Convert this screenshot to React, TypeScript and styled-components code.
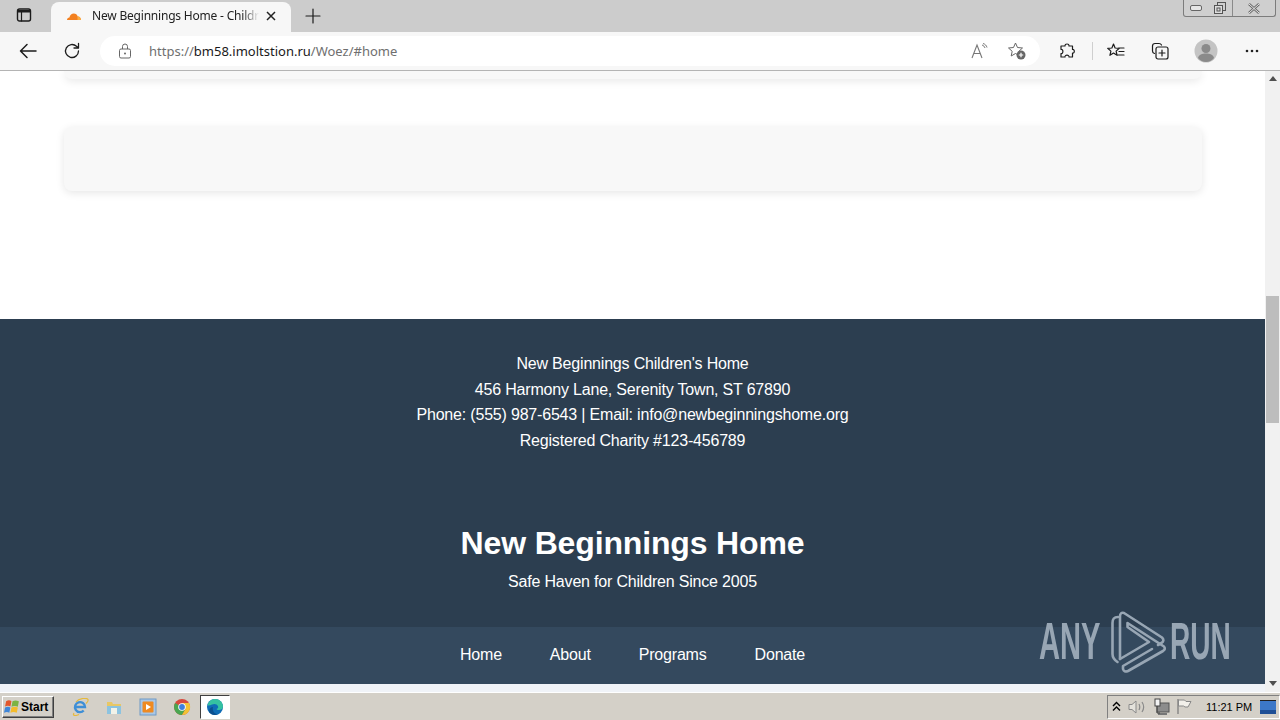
import React from "react";
import styled, { createGlobalStyle } from "styled-components";

const Global = createGlobalStyle`
  html, body { margin: 0; padding: 0; width: 1280px; height: 720px; overflow: hidden; background: #fff; }
  * { box-sizing: border-box; }
`;
const Screen = styled.div`
  width: 1280px; height: 720px; position: relative; display: flex; flex-direction: column; overflow: hidden;
  font-family: "Liberation Sans", Arial, sans-serif;
`;
const TabBar = styled.div`
  height: 32px; flex: none; background: #cccccc; display: flex; align-items: flex-end; position: relative;
`;
const TabToggle = styled.div`
  width: 51px; height: 32px; display: flex; align-items: center; justify-content: center; padding: 0 3px 2px 0;
`;
const Tab = styled.div`
  width: 240px; height: 30px; background: #f7f7f7; border-radius: 8px 8px 0 0; display: flex; align-items: center;
  padding: 0 0 3px 15px; gap: 9px; font-family: "Noto Sans", sans-serif; font-size: 12px; color: #222;
`;
const TabTitle = styled.span`
  width: 167px; line-height: 18px; overflow: hidden; white-space: nowrap; letter-spacing: -0.2px; margin-left: 1px;
  -webkit-mask-image: linear-gradient(90deg, #000 90%, transparent);
  mask-image: linear-gradient(90deg, #000 90%, transparent);
`;
const NewTab = styled.div`
  width: 44px; height: 30px; display: flex; align-items: center; justify-content: center; padding-bottom: 3px;
`;
const WindowButtons = styled.div`
  position: absolute; top: 0; left: 1183px; width: 93px; height: 17px; border: 1px solid #7c7c7c; border-top: none;
  border-radius: 0 0 3px 3px; display: flex; background: #cfcfcf;
`;
const WinButton = styled.div<{ $w: number; $line?: boolean }>`
  width: ${(p) => p.$w}px; display: flex; align-items: center; justify-content: center;
  border-right: ${(p) => (p.$line ? "1px solid #8a8a8a" : "none")};
`;
const Toolbar = styled.div`
  height: 39px; flex: none; background: #f7f7f7; border-bottom: 1px solid #b4b4b4; display: flex; align-items: center;
`;
const NavIcon = styled.div<{ $w: number; $ml?: number }>`
  width: ${(p) => p.$w}px; height: 32px; flex: none; display: flex; align-items: center; justify-content: center;
  margin-left: ${(p) => p.$ml ?? 0}px;
`;
const AddressPill = styled.div`
  width: 940px; height: 30px; margin-left: 12px; background: #fff; border-radius: 15px; display: flex; align-items: center; flex: none;
  padding-left: 18px;
`;
const Url = styled.div`
  margin-left: 17px; flex: 1; font-family: "Noto Sans", sans-serif; font-size: 13px; line-height: 18px; color: #6f6f6f; white-space: nowrap;
  b { font-weight: 400; color: #1a1a1a; }
`;
const Divider = styled.div`
  width: 1px; height: 18px; background: #cfcfcf; flex: none;
`;
const Viewport = styled.div`
  height: 621px; flex: none; display: flex; background: #fff; overflow: hidden;
`;
const Page = styled.div`
  width: 1265px; flex: none; display: flex; flex-direction: column; color: #fff;
`;
const Main = styled.div`
  height: 248px; flex: none; display: flex; flex-direction: column; align-items: center; gap: 48px; background: #fff;
`;
const Card = styled.div<{ $h: number; $cut?: boolean }>`
  width: 1138px; height: ${(p) => p.$h}px; background: #f8f8f8; flex: none;
  border-radius: ${(p) => (p.$cut ? "0 0 8px 8px" : "8px")};
  box-shadow: 0 2px 8px rgba(0, 0, 0, 0.1);
`;
const Footer = styled.footer`
  background: #2c3e50; text-align: center; flex: none;
`;
const Contact = styled.div`
  padding: 32px; font-size: 16px; line-height: 25.6px; letter-spacing: -0.19px;
  p { margin: 0; }
`;
const Brand = styled.header`
  padding: 33px 32px 32px;
`;
const BrandTitle = styled.h1`
  margin: 0; font-size: 32px; line-height: 51px; font-weight: 700; letter-spacing: -0.15px; color: #fff;
`;
const Tagline = styled.p`
  margin: 0; font-size: 16px; line-height: 25.6px; letter-spacing: -0.19px;
`;
const SiteNav = styled.nav`
  background: #34495e; height: 57px; flex: none; display: flex; align-items: center; justify-content: center; gap: 48px;
  font-size: 16px; letter-spacing: -0.19px;
`;
const Strip = styled.div`
  flex: 1; background: #f0f3f8;
`;
const Scrollbar = styled.div`
  width: 15px; flex: none; background: #f1f1f1; display: flex; flex-direction: column; align-items: center;
`;
const ScrollArrow = styled.div<{ $down?: boolean }>`
  width: 0; height: 0; border-left: 4px solid transparent; border-right: 4px solid transparent;
  ${(p) => (p.$down ? "border-top: 5px solid #505050; margin-top: 258px;" : "border-bottom: 5px solid #505050; margin-top: 5px;")}
`;
const ScrollThumb = styled.div`
  width: 13px; height: 127px; background: #bdbdbd; margin-top: 215px; flex: none;
`;
const Watermark = styled.div`
  position: absolute; left: 1039px; top: 608px; width: 193px; height: 66px; display: flex; align-items: center;
  color: #98a6b4;
`;
const WmText = styled.span<{ $scale: number; $w: number }>`
  font-family: "Liberation Sans", sans-serif; font-size: 52px; line-height: 66px; font-weight: 700; width: ${(p) => p.$w}px; white-space: nowrap; flex: none;
  display: block; transform: scaleX(${(p) => p.$scale}); transform-origin: left center;
`;
const Taskbar = styled.div`
  height: 28px; flex: none; background: #d4d0c8; border-top: 1px solid #fff; display: flex; align-items: center; padding-left: 2px;
`;
const StartButton = styled.div`
  width: 52px; height: 22px; background: #d4d0c8; border: 1px solid; border-color: #fff #404040 #404040 #fff;
  box-shadow: inset -1px -1px 0 #808080; display: flex; align-items: center; padding-left: 1px;
  font: 700 12px "Liberation Sans", sans-serif; color: #000; flex: none;
`;
const TaskIcons = styled.div`
  display: flex; align-items: center; margin-left: 9px; flex: none;
`;
const TaskIcon = styled.div<{ $active?: boolean }>`
  width: ${(p) => (p.$active ? 30 : 34)}px; height: 24px; display: flex; align-items: center; justify-content: center; flex: none;
  ${(p) => (p.$active ? "background:#fff; border:1px solid; border-color:#404040 #fff #fff #404040; margin-left:1px;" : "")}
`;
const Tray = styled.div`
  margin-left: auto; width: 173px; height: 24px; border: 1px solid; border-color: #808080 #fff #fff #808080; display: flex; align-items: center; flex: none;
  padding-left: 1px;
`;
const Clock = styled.span`
  font: 11px "Liberation Sans", sans-serif; color: #000; margin-left: 9px; width: 54px; white-space: nowrap; flex: none;
`;
const TrayIcon = styled.div<{ $w: number }>`
  width: ${(p) => p.$w}px; height: 18px; flex: none; display: flex; align-items: center; justify-content: center;
`;

const Line = { fill: "none", stroke: "#1c1c1c", strokeWidth: 1.2, strokeLinecap: "round", strokeLinejoin: "round" } as const;

const App = () => (
  <Screen>
    <Global />
    <TabBar>
      <TabToggle>
        <svg width="16" height="16" viewBox="0 0 16 16"><rect x="1.5" y="2" width="13" height="12" rx="2" {...Line} strokeWidth={1.4} /><path d="M2 3h12v2.5H2z" fill="#1c1c1c" /><path d="M5.5 5v9" {...Line} /></svg>
      </TabToggle>
      <Tab>
        <svg width="16" height="10" viewBox="0 0 16 10"><path d="M1 9c0-1.5 1-2.4 2.4-2.5C4 4 5.800 2.500 7.800 2.500c2 0 3.400 1.200 3.900 3 1.800-.3 3.300 1.500 3.300 3.500z" fill="#f38020" /><path d="M11.500 5.500c1.800-.3 3.300 1.500 3.500 3.500h-3.500z" fill="#fbad41" /></svg>
        <TabTitle>New Beginnings Home - Childr</TabTitle>
        <svg width="12" height="12" viewBox="0 0 12 12" style={{ marginLeft: -3 }}><path d="M2 2l8 8M10 2l-8 8" fill="none" stroke="#222" strokeWidth="1.500" /></svg>
      </Tab>
      <NewTab>
        <svg width="16" height="16" viewBox="0 0 16 16"><path d="M8 1v14M1 8h14" {...Line} /></svg>
      </NewTab>
      <WindowButtons>
        <WinButton $w={24}><svg width="12" height="6" viewBox="0 0 12 6"><rect x="0.500" y="0.500" width="11" height="5" rx="1.500" fill="#e6e6e6" stroke="#666" /></svg></WinButton>
        <WinButton $w={25} $line><svg width="14" height="14" viewBox="0 0 14 14"><rect x="4.500" y="1.500" width="8" height="8" fill="none" stroke="#555" /><rect x="1.500" y="4.500" width="8" height="8" fill="#ddd" stroke="#555" /><rect x="4" y="7" width="3" height="3" fill="none" stroke="#555" /></svg></WinButton>
        <WinButton $w={42}><svg width="14" height="11" viewBox="0 0 14 11"><path d="M2 1l10 9M12 1L2 10" fill="none" stroke="#666" strokeWidth="2.400" /><path d="M2 1l10 9M12 1L2 10" fill="none" stroke="#e8e8e8" strokeWidth="1" /></svg></WinButton>
      </WindowButtons>
    </TabBar>
    <Toolbar>
      <NavIcon $w={56}><svg width="18" height="16" viewBox="0 0 18 16"><path d="M17 8H1.500M8 1.500L1.500 8 8 14.500" {...Line} strokeWidth={1.500} /></svg></NavIcon>
      <NavIcon $w={32}><svg width="18" height="18" viewBox="0 0 18 18"><path d="M15.500 9a6.500 6.500 0 1 1-2-4.700L15.500 6M15.500 1.500V6H11" {...Line} strokeWidth={1.300} /></svg></NavIcon>
      <AddressPill>
        <svg width="14" height="16" viewBox="0 0 14 16"><rect x="1.500" y="6" width="11" height="9" rx="1.500" fill="none" stroke="#666" /><path d="M4.500 6V3.500a2.500 2.500 0 0 1 5 0V6" fill="none" stroke="#666" /><circle cx="7" cy="10.500" r="1" fill="#666" /></svg>
        <Url>https://<b>bm58.imoltstion.ru</b>/Woez/#home</Url>
        <NavIcon $w={28}><svg width="18" height="16" viewBox="0 0 18 16"><path d="M1 15L6 2l5 13M3 10.500h6" fill="none" stroke="#777" strokeWidth="1.100" /><path d="M11 2c1.500.5 2.500 1.500 3 3M12 .500c2 .5 3.500 2 4 4" fill="none" stroke="#777" /></svg></NavIcon>
        <NavIcon $w={46}><svg width="20" height="20" viewBox="0 0 20 20"><path d="M8.500 2l2 4.500 5 .5-3.700 3.300 1 4.700-4.300-2.500L4.200 15l1-4.700L1.500 7l5-.5z" fill="none" stroke="#666" /><circle cx="14" cy="14" r="4.500" fill="#666" /><path d="M14 11.800v4.400M11.800 14h4.400" stroke="#fff" strokeWidth="1.200" /></svg></NavIcon>
      </AddressPill>
      <NavIcon $w={50} $ml={2}><svg width="18" height="18" viewBox="0 0 18 18"><path d="M7 3.500C7 1.500 11 1.500 11 3.500V4H14.500V7.500C16.800 7 17 11.500 14.500 11V15H11C11.500 12.500 6.500 12.500 7 15H3V11.500C5.500 12 5.500 7 3 7.500V4H7Z" {...Line} /></svg></NavIcon>
      <Divider />
      <NavIcon $w={46}><svg width="18" height="18" viewBox="0 0 18 18"><path d="M6.500 2l1.600 4 4.200.3-3.200 2.800 1 4.200-3.600-2.300-3.600 2.300 1-4.200L.7 6.300 4.900 6zM11.500 6H17M12 9.500h5M11 13h6" {...Line} /></svg></NavIcon>
      <NavIcon $w={42}><svg width="18" height="18" viewBox="0 0 18 18"><path d="M3.500 11.500C2 11 1.500 10 1.500 9V4c0-1.500 1-2.500 2.500-2.500h4c1 0 2 .5 2.500 1.500" {...Line} /><rect x="5" y="5" width="12" height="12" rx="2" {...Line} /><path d="M11 8v6M8 11h6" {...Line} /></svg></NavIcon>
      <NavIcon $w={50}><svg width="24" height="24" viewBox="0 0 24 24"><circle cx="12" cy="12" r="11.500" fill="#c4c4c4" /><circle cx="12" cy="9.500" r="4.500" fill="#8a8a8a" /><path d="M4 19c1-3.500 4-4.500 8-4.500s7 1 8 4.500c-2 2.500-5 4-8 4s-6-1.500-8-4z" fill="#8a8a8a" /></svg></NavIcon>
      <NavIcon $w={42}><svg width="14" height="4" viewBox="0 0 14 4"><circle cx="2" cy="2" r="1.300" fill="#222" /><circle cx="7" cy="2" r="1.300" fill="#222" /><circle cx="12" cy="2" r="1.300" fill="#222" /></svg></NavIcon>
    </Toolbar>
    <Viewport>
      <Page>
        <Main>
          <Card $h={8} $cut />
          <Card $h={64} />
        </Main>
        <Footer>
          <Contact>
            <p>New Beginnings Children's Home</p>
            <p>456 Harmony Lane, Serenity Town, ST 67890</p>
            <p>Phone: (555) 987-6543 | Email: info@newbeginningshome.org</p>
            <p>Registered Charity #123-456789</p>
          </Contact>
          <Brand>
            <BrandTitle>New Beginnings Home</BrandTitle>
            <Tagline>Safe Haven for Children Since 2005</Tagline>
          </Brand>
        </Footer>
        <SiteNav>
          <span>Home</span>
          <span>About</span>
          <span>Programs</span>
          <span>Donate</span>
        </SiteNav>
        <Strip />
      </Page>
      <Scrollbar>
        <ScrollArrow />
        <ScrollThumb />
        <ScrollArrow $down />
      </Scrollbar>
    </Viewport>
    <Taskbar>
      <StartButton>
        <svg width="17" height="16" viewBox="0 0 16 15"><path d="M2 2c2-1 3.500-1 5 0l-1 5C4.500 6 3 6 1 7z" fill="#e2572c" /><path d="M8 2.200c2-1 3.500-1 6 0l-1 5c-2-1-4-1-6 0z" fill="#7cb342" /><path d="M1 8c2-1 3.500-1 5 0l-1 5c-1.500-1-3-1-5 0z" fill="#3f86d8" /><path d="M7 8c2-1 4-1 6 0l-1 5c-2-1-4-1-6 0z" fill="#f4bb2a" /></svg>
        Start
      </StartButton>
      <TaskIcons>
        <TaskIcon><svg width="18" height="18" viewBox="0 0 18 18"><path d="M3 15c-2 3 2 3 5 1.500M5 4c3-4 11-4.500 12-2.500.7 1.500-1 3-2 4" fill="none" stroke="#e5b93c" strokeWidth="1.200" /><path d="M4.500 9h9.500a5 5 0 1 0-1.300 3.500" fill="none" stroke="#3f8fd6" strokeWidth="2.400" /></svg></TaskIcon>
        <TaskIcon><svg width="18" height="18" viewBox="0 0 18 18"><path d="M2 4h5l1 2h8v10H2z" fill="#e8c765" /><path d="M2 8h14v8H2z" fill="#8cc3e0" /><rect x="6" y="10" width="6" height="6" fill="#f2f2e8" /></svg></TaskIcon>
        <TaskIcon><svg width="18" height="18" viewBox="0 0 18 18"><rect x="1" y="1" width="16" height="16" fill="#a9c7e6" stroke="#6f9ac6" /><rect x="3.500" y="3.500" width="11" height="11" rx="1" fill="#ee8a22" /><path d="M7 6l5 3-5 3z" fill="#fff" /></svg></TaskIcon>
        <TaskIcon><svg width="18" height="18" viewBox="0 0 18 18"><circle cx="9" cy="9" r="8" fill="#d8493d" /><path d="M9 9L2.100 5A8 8 0 0 0 9 17l3.500-6z" fill="#4aa651" /><path d="M9 5h7a8 8 0 0 1-7 12l3.500-6z" fill="#f3c233" /><circle cx="9" cy="9" r="3.800" fill="#fff" /><circle cx="9" cy="9" r="2.900" fill="#3f7fdd" /></svg></TaskIcon>
        <TaskIcon $active><svg width="18" height="18" viewBox="0 0 18 18"><circle cx="9" cy="9" r="8" fill="#0f6cb5" /><path d="M1.500 7C3 2.500 6.500 1 9 1c4.500 0 8 3.500 8 7.500 0 2.500-2 3.500-4 3.500-1.500 0-2.500-.5-2.500-1 1.500-.5 2-1.500 1.500-2.800C11 6 8.500 5.500 6 6.500 4 7.300 2.500 8 1.500 7z" fill="#35c1a1" /><path d="M7 9c-1 3 1 7 5 7.300-1 .5-2 .7-3 .7-3 0-5-1.500-6-3.500C3 11 5 9 7 9z" fill="#0b4f8f" /></svg></TaskIcon>
      </TaskIcons>
      <Tray>
        <TrayIcon $w={14}><svg width="9" height="11" viewBox="0 0 9 11"><path d="M1 5l3.500-3.500L8 5M1 9.500L4.500 6 8 9.500" fill="none" stroke="#000" strokeWidth="1.400" /></svg></TrayIcon>
        <TrayIcon $w={28}><svg width="18" height="16" viewBox="0 0 18 16"><path d="M1 5.500h3L8 2v12l-4-3.500H1z" fill="#e4e2dc" stroke="#8a8a8a" /><path d="M11 5c1 2 1 4 0 6M14 3c2 3 2 7 0 10" fill="none" stroke="#8a8a8a" strokeWidth="1.200" /></svg></TrayIcon>
        <TrayIcon $w={20}><svg width="18" height="18" viewBox="0 0 18 18"><rect x="5" y="5" width="12" height="9" fill="#8c8c8c" stroke="#555" /><rect x="3" y="1" width="5" height="7" fill="#f2f2f2" stroke="#444" /><rect x="6" y="15" width="9" height="2" fill="#777" /><path d="M5 8v7h3" fill="none" stroke="#444" /></svg></TrayIcon>
        <TrayIcon $w={26}><svg width="16" height="17" viewBox="0 0 16 17"><path d="M2 1v15" stroke="#777" strokeWidth="1.200" /><path d="M2.500 2h6l1.500 1.500h5L12 9H9L7.500 8h-5z" fill="#f2f0ea" stroke="#888" /></svg></TrayIcon>
        <Clock>11:21 PM</Clock>
        <TrayIcon $w={16}><svg width="16" height="14" viewBox="0 0 16 14"><rect width="16" height="14" fill="#3c78c8" /><rect y="10" width="16" height="4" fill="#1f4f95" /><rect x="0" y="0" width="16" height="1" fill="#222" /></svg></TrayIcon>
      </Tray>
    </Taskbar>
    <Watermark>
      <WmText $scale={0.56} $w={69}>ANY</WmText>
      <svg width="60" height="66" viewBox="0 0 60 66" style={{ flex: "none", marginRight: 2 }}>
        <g fill="none" stroke="#98a6b4" strokeWidth="2.600" strokeLinejoin="round" strokeLinecap="round">
          <path d="M10 9C6 9 4.500 11 4.500 15v31c0 4 2 6 5 8" />
          <path d="M12 51V8.500Q12 4 16 5L54 29.500Q57 32.500 53.500 35L50 37" />
          <path d="M12 51L41 34 19.500 19V15L56 38.500Q58 41 55 43L20 63Q16 64.500 15 61V58L44 41" />
        </g>
      </svg>
      <WmText $scale={0.54} $w={62}>RUN</WmText>
    </Watermark>
  </Screen>
);

export default App;
